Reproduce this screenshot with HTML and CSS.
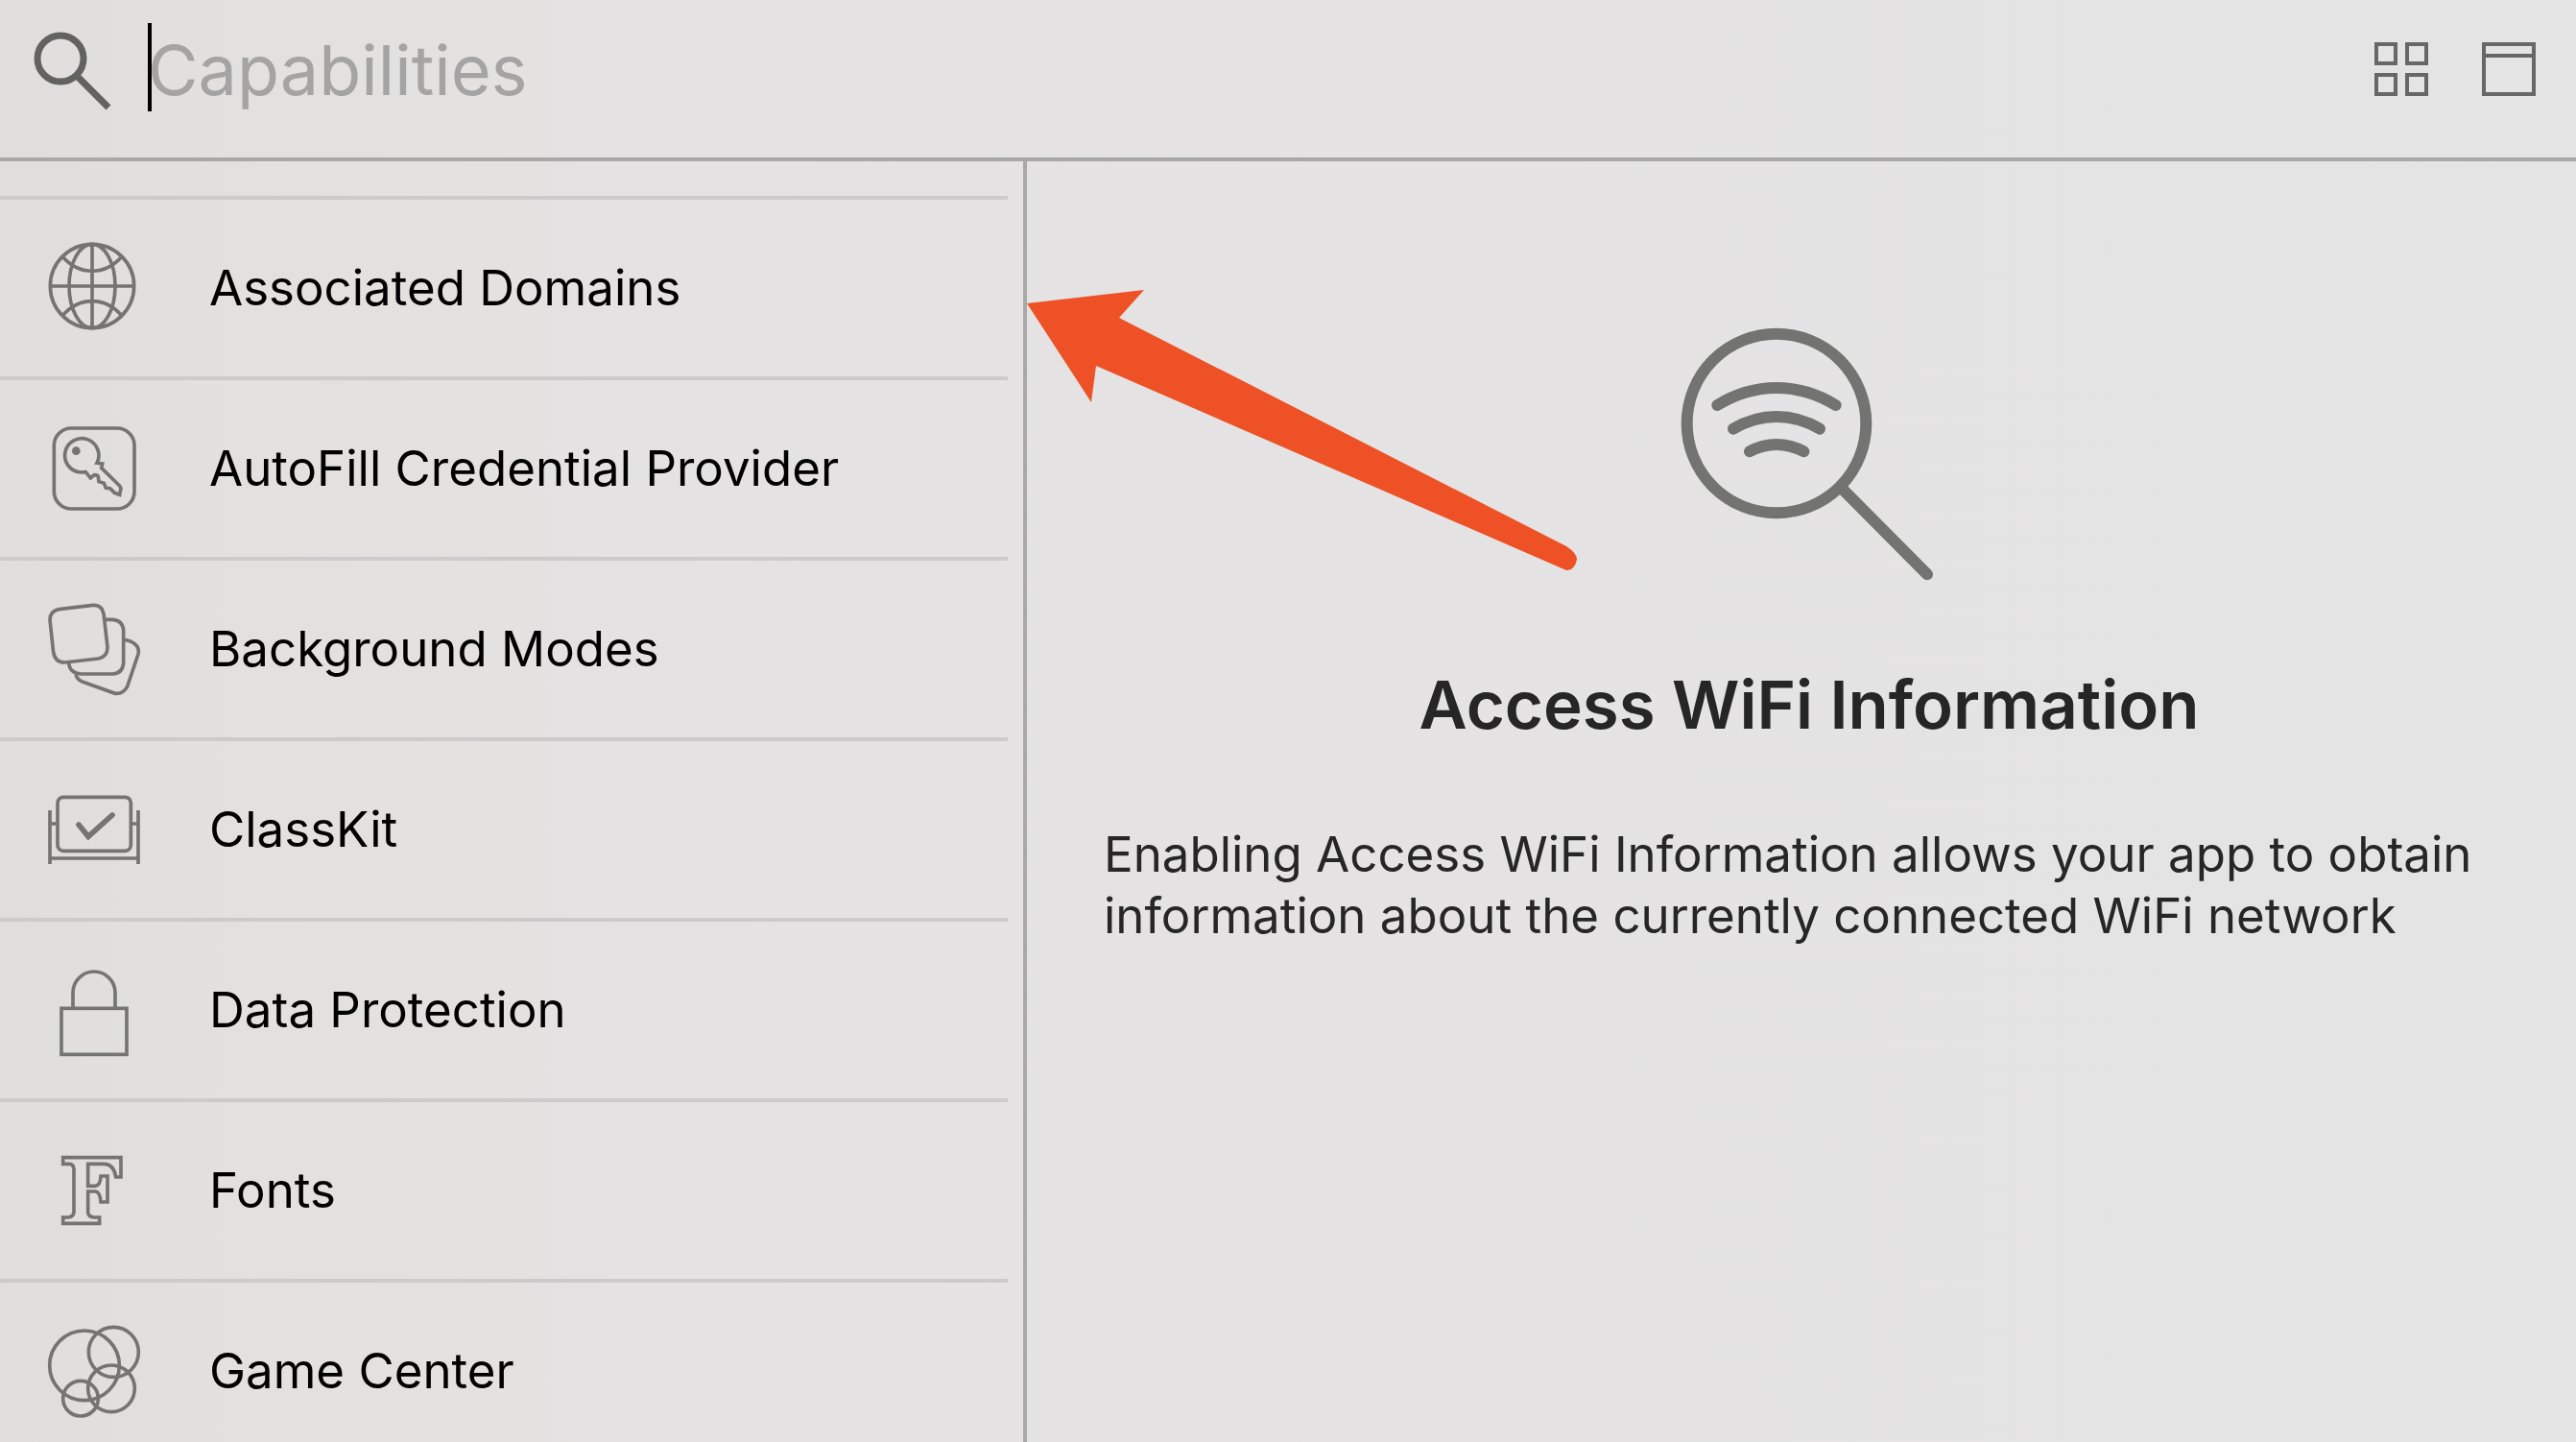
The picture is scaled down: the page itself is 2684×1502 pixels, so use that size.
FILE: index.html
```html
<!DOCTYPE html>
<html lang="en">
<head>
<meta charset="utf-8">
<meta name="viewport" content="width=device-width, initial-scale=1">
<title>Capabilities</title>
<link rel="stylesheet" href="styles.css">
</head>
<body>
<div class="library">
  <header class="toolbar">
    <label class="search-label" for="search" aria-label="Search capabilities">
      <svg class="search-icon" viewBox="24 24 96 96" aria-hidden="true">
        <circle cx="63" cy="61" r="24"/>
        <path d="M80 79 113 112"/>
      </svg>
    </label>
    <div class="search-field">
      <input class="search-input" id="search" type="text" placeholder="Capabilities">
    </div>
    <div class="view-buttons">
      <button class="view-button" type="button" aria-label="Grid view">
        <svg class="view-icon" viewBox="0 0 56 56" aria-hidden="true">
          <rect x="2" y="2" width="20" height="20"/>
          <rect x="34" y="2" width="20" height="20"/>
          <rect x="2" y="34" width="20" height="20"/>
          <rect x="34" y="34" width="20" height="20"/>
        </svg>
      </button>
      <button class="view-button" type="button" aria-label="Detail view">
        <svg class="view-icon" viewBox="0 0 56 56" aria-hidden="true">
          <rect x="2" y="2" width="52" height="52"/>
          <path d="M2 14H54"/>
        </svg>
      </button>
    </div>
  </header>
  <main class="content">
    <ul class="list">
      <li class="item">
        <button class="item-button" type="button">
          <svg class="item-icon" viewBox="54 60 300 300" aria-hidden="true">
            <circle cx="198" cy="204" r="131"/>
            <ellipse cx="198" cy="204" rx="72" ry="131"/>
            <path d="M198 73V335M67 204H329M105 112Q145 157 198 157T291 112M105 297Q145 251 198 251T291 297"/>
          </svg>
          Associated Domains
        </button>
      </li>
      <li class="item">
        <button class="item-button" type="button">
          <svg class="item-icon" viewBox="54 54 300 300" aria-hidden="true">
            <rect x="79" y="78" width="251" height="252" rx="54"/>
            <path d="M213 187A53 53 0 1 0 163 216Q172 216 178 215L193 234 205 224Q215 224 217 230L219 245 235 250 241 265 254 266 268 280 284 286 288 266 284 258 227 202 230 189Z"/>
            <circle class="dot" cx="148" cy="149" r="13"/>
          </svg>
          AutoFill Credential Provider
        </button>
      </li>
      <li class="item">
        <button class="item-button" type="button">
          <svg class="item-icon" viewBox="54 48 300 300" aria-hidden="true">
            <path d="M94 74 201 61Q229 59 234 88L246 192Q247 221 218 228L113 240Q83 241 77 209L66 107Q66 80 94 74Z"/>
            <path d="M240 106H262Q294 109 296 140V241Q294 274 262 276H162Q128 274 125 242"/>
            <path d="M300 169 320 175Q348 188 342 214L308 315Q296 339 270 337L167 300Q151 293 147 278"/>
          </svg>
          Background Modes
        </button>
      </li>
      <li class="item">
        <button class="item-button" type="button">
          <svg class="item-icon" viewBox="54 42 300 300" aria-hidden="true">
            <rect x="90" y="91" width="229" height="168" rx="18"/>
            <path d="M66 132V300M342 132V300M66 282H342M66 174H90M319 174H342"/>
            <path class="check" d="M156 177 186 214 261 147"/>
          </svg>
          ClassKit
        </button>
      </li>
      <li class="item">
        <button class="item-button" type="button">
          <svg class="item-icon" viewBox="54 36 300 300" aria-hidden="true">
            <rect x="102" y="181" width="204" height="144"/>
            <path d="M138 181V132A66 66 0 0 1 270 132V181"/>
          </svg>
          Data Protection
        </button>
      </li>
      <li class="item">
        <button class="item-button" type="button">
          <svg class="item-icon" viewBox="54 30 300 300" aria-hidden="true">
            <path d="M107 77H288V138H272Q266 97 235 97H185V166H208Q224 164 225 135H246V216H225Q223 185 208 183H185V250Q187 262 204 264H221V283H107V264H123Q139 262 141 248V112Q140 98 126 97H107Z"/>
          </svg>
          Fonts
        </button>
      </li>
      <li class="item">
        <button class="item-button" type="button">
          <svg class="item-icon" viewBox="54 54 300 300" aria-hidden="true">
            <circle cx="174" cy="187" r="109"/>
            <circle cx="265" cy="145" r="78"/>
            <circle cx="258" cy="259" r="73"/>
            <circle cx="162" cy="290" r="55"/>
          </svg>
          Game Center
        </button>
      </li>
    </ul>
    <section class="detail">
      <svg class="detail-icon" viewBox="87 48 816 816" aria-hidden="true">
        <circle cx="393" cy="363" r="280"/>
        <path d="M598 567 864 835M208 306Q296 252 393 252T578 306M258 380Q322 342 393 342T528 380M309 451Q349 429 393 429T478 451"/>
      </svg>
      <h1 class="detail-title">Access WiFi Information</h1>
      <p class="detail-text">Enabling Access WiFi Information allows your app to obtain information about the currently connected WiFi network</p>
      <svg class="pointer" viewBox="1070 298 576 300" aria-hidden="true">
        <path d="M1070 316 1192 302 1166 331 1632 569Q1643 576 1643 583 1640 595 1632 594L1142 381 1137 419Z"/>
      </svg>
    </section>
  </main>
</div>
</body>
</html>
```
FILE: styles.css
```css
* {
  box-sizing: border-box;
}

body {
  margin: 0;
  font-family: Inter, "Liberation Sans", sans-serif;
  font-size: 51px;
  line-height: 64px;
  color: #000;
}

svg {
  display: block;
  flex: none;
  fill: none;
}

button {
  padding: 0;
  border: 0;
  background: none;
  font: inherit;
  color: inherit;
}

.library {
  display: flex;
  flex-direction: column;
  height: 100vh;
  background: linear-gradient(to right, #dfdedc, #e2e1df 10%, #e4e2e2 24%, #e5e4e4);
}

.toolbar {
  display: flex;
  flex: none;
  align-items: center;
  height: 168px;
  padding: 0 42px 20px 24px;
  border-bottom: 4px solid #a9a8a8;
}

.search-icon {
  width: 96px;
  height: 96px;
  stroke: #62625f;
  stroke-width: 7;
}

.search-field {
  position: relative;
  flex: 1;
  height: 96px;
  margin-left: 34px;
}

/* Insertion point at the start of the empty field */
.search-field::before {
  content: "";
  position: absolute;
  top: 0;
  left: 0;
  width: 4px;
  height: 92px;
  background: #000;
}

.search-input {
  width: 100%;
  height: 96px;
  padding: 0;
  border: 0;
  outline: 0;
  background: none;
  font: inherit;
  font-size: 72px;
}

.search-input::placeholder {
  color: #a5a4a4;
  opacity: 1;
}

.view-buttons {
  display: flex;
  gap: 56px;
}

.view-icon {
  width: 56px;
  height: 56px;
  stroke: #686767;
  stroke-width: 4;
}

.content {
  display: grid;
  flex: 1;
  grid-template-columns: 1070px 1fr;
  min-height: 0;
}

.list {
  margin: 0;
  padding: 36px 16px 0 0;
  overflow: hidden;
  border-right: 4px solid #a9a8a8;
  list-style: none;
}

.item {
  border-top: 4px solid #cccaca;
}

.item-button {
  display: flex;
  align-items: center;
  gap: 70px;
  width: 100%;
  height: 184px;
  padding-left: 48px;
  text-align: left;
}

.item-icon {
  width: 100px;
  height: 100px;
  stroke: #747473;
  stroke-width: 11;
}

.item-icon .dot {
  fill: #747473;
  stroke: none;
}

.item-icon .check {
  stroke-width: 17;
  stroke-linecap: round;
}

.detail {
  position: relative;
  display: flex;
  flex-direction: column;
  align-items: center;
  padding: 168px 64px 0 80px;
  color: #262626;
}

.detail-icon {
  width: 272px;
  height: 272px;
  stroke: #737372;
  stroke-width: 36;
  stroke-linecap: round;
}

.detail-title {
  margin: 84px 0 82px;
  font-size: 69px;
  font-weight: 600;
  line-height: 84px;
}

.detail-text {
  width: 100%;
  margin: 0;
}

/* Callout arrow laid over the panel, pointing at the list */
.pointer {
  position: absolute;
  top: 130px;
  left: 0;
  width: 576px;
  height: 300px;
  fill: #ee5126;
}
```
